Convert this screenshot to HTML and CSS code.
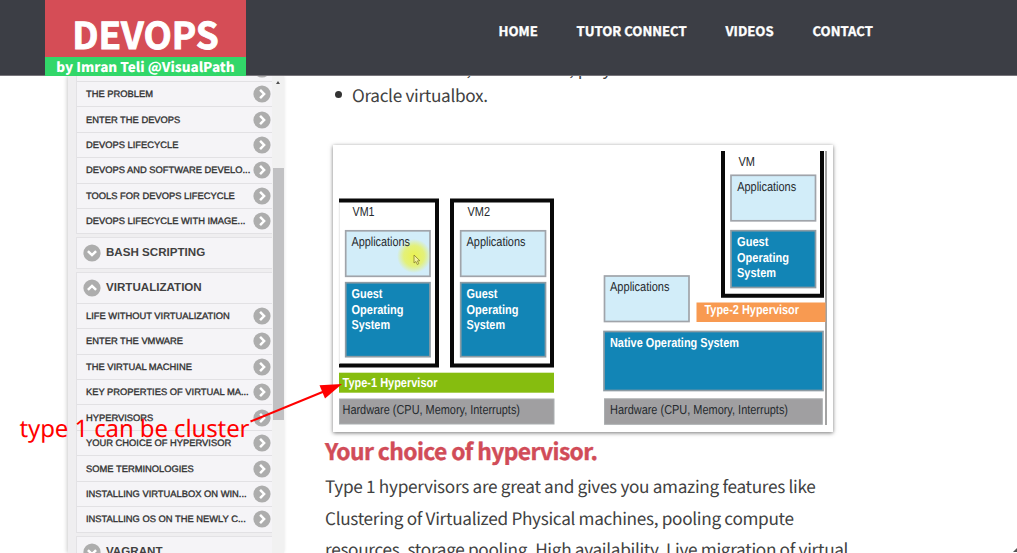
FILE: index.html
```
<!DOCTYPE html>
<html lang="en">
<head>
<meta charset="utf-8">
<title>DevOps by Imran Teli</title>
<link rel="stylesheet" href="styles.css">
</head>
<body>
<svg class="defs" width="0" height="0">
  <symbol id="chev" viewBox="0 0 18 18"><circle cx="9" cy="9" r="8.6" fill="#adadad"/><path d="M7.1 4.9l4 4.1-4 4.1" fill="none" stroke="#fff" stroke-width="2.5"/></symbol>
</svg>
<header class="header">
  <div class="logo">
    <div class="logo-title">DEVOPS</div>
    <div class="logo-sub">by Imran Teli @VisualPath</div>
  </div>
  <nav class="nav">
    <a class="n1">HOME</a><a class="n2">TUTOR CONNECT</a><a class="n3">VIDEOS</a><a class="n4">CONTACT</a>
  </nav>
</header>
<main class="main">
  <aside class="sidebar">
    <div class="menu">
      <div class="group first">
        <div class="row"><span></span><svg class="icon"><use href="#chev"/></svg></div>
        <div class="row"><span>THE PROBLEM</span><svg class="icon"><use href="#chev"/></svg></div>
        <div class="row"><span>ENTER THE DEVOPS</span><svg class="icon"><use href="#chev"/></svg></div>
        <div class="row"><span>DEVOPS LIFECYCLE</span><svg class="icon"><use href="#chev"/></svg></div>
        <div class="row"><span>DEVOPS AND SOFTWARE DEVELO...</span><svg class="icon"><use href="#chev"/></svg></div>
        <div class="row"><span>TOOLS FOR DEVOPS LIFECYCLE</span><svg class="icon"><use href="#chev"/></svg></div>
        <div class="row"><span>DEVOPS LIFECYCLE WITH IMAGE...</span><svg class="icon"><use href="#chev"/></svg></div>
      </div>
      <div class="group"><div class="head"><svg class="icon down"><use href="#chev"/></svg>BASH SCRIPTING</div></div>
      <div class="group">
        <div class="head"><svg class="icon up"><use href="#chev"/></svg>VIRTUALIZATION</div>
        <div class="row"><span>LIFE WITHOUT VIRTUALIZATION</span><svg class="icon"><use href="#chev"/></svg></div>
        <div class="row"><span>ENTER THE VMWARE</span><svg class="icon"><use href="#chev"/></svg></div>
        <div class="row"><span>THE VIRTUAL MACHINE</span><svg class="icon"><use href="#chev"/></svg></div>
        <div class="row"><span>KEY PROPERTIES OF VIRTUAL MA...</span><svg class="icon"><use href="#chev"/></svg></div>
        <div class="row"><span>HYPERVISORS</span><svg class="icon"><use href="#chev"/></svg></div>
        <div class="row"><span>YOUR CHOICE OF HYPERVISOR</span><svg class="icon"><use href="#chev"/></svg></div>
        <div class="row"><span>SOME TERMINOLOGIES</span><svg class="icon"><use href="#chev"/></svg></div>
        <div class="row"><span>INSTALLING VIRTUALBOX ON WIN...</span><svg class="icon"><use href="#chev"/></svg></div>
        <div class="row"><span>INSTALLING OS ON THE NEWLY C...</span><svg class="icon"><use href="#chev"/></svg></div>
      </div>
      <div class="group"><div class="head"><svg class="icon down"><use href="#chev"/></svg>VAGRANT</div></div>
    </div>
    <div class="scrollbar"><div class="arrow"></div><div class="thumb"></div></div>
  </aside>
  <section class="content">
    <ul class="list">
      <li class="cut">VMware server, workstation, player</li>
      <li>Oracle virtualbox.</li>
    </ul>
    <figure class="figure">
      <svg class="diagram" width="500" height="287" viewBox="333 145 500 287">
        <g fill="none" stroke="#090909" stroke-width="4">
          <path d="M339 200.5H437V365.5H339M452 200.5H552V365.5H452zM723 151V295.700H822V151"/>
        </g>
        <path d="M826 151V425" stroke="#8c8c8c" stroke-width="1.6"/>
        <path d="M339.300 203V364" stroke="#ddd" stroke-width=".7"/>
        <g fill="#d2edf9" stroke="#a0a4aa" stroke-width="1.7">
          <rect x="345.700" y="230.800" width="84.300" height="45.500"/><rect x="460.700" y="230.800" width="84.800" height="45.500"/>
          <rect x="731" y="175.300" width="84.500" height="45.500"/><rect x="604.500" y="276" width="84.500" height="45.500"/>
        </g>
        <g fill="#1285b6" stroke="#8d9ba3" stroke-width="1.7">
          <rect x="345.700" y="282.700" width="84.300" height="74"/><rect x="460.700" y="282.700" width="84.800" height="74"/>
          <rect x="731" y="230.700" width="84.500" height="56.800"/><rect x="604" y="331.500" width="219" height="59"/>
        </g>
        <rect x="339" y="372.700" width="215" height="20" fill="#86bd0f"/>
        <rect x="696.500" y="302.500" width="129" height="19.500" fill="#f89a51"/>
        <g fill="#a09fa1" stroke="#aaaeb0" stroke-width="1"><rect x="339.500" y="399" width="214.500" height="25"/><rect x="604.500" y="398.800" width="217.800" height="25.500"/></g>
        <radialGradient id="glow"><stop offset="0" stop-color="#ebf24e"/><stop offset=".6" stop-color="#e5f16c" stop-opacity=".9"/><stop offset="1" stop-color="#e5f16c" stop-opacity="0"/></radialGradient>
        <circle cx="414" cy="256" r="17" fill="url(#glow)"/>
        <g class="label">
          <text x="352.500" y="216" textLength="22" lengthAdjust="spacingAndGlyphs">VM1</text>
          <text x="467.500" y="216" textLength="22.500" lengthAdjust="spacingAndGlyphs">VM2</text>
          <text x="738.500" y="165.500" textLength="16.500" lengthAdjust="spacingAndGlyphs">VM</text>
          <text x="351.500" y="246" textLength="58.500" lengthAdjust="spacingAndGlyphs">Applications</text>
          <text x="466.500" y="246" textLength="59" lengthAdjust="spacingAndGlyphs">Applications</text>
          <text x="737.200" y="191" textLength="59" lengthAdjust="spacingAndGlyphs">Applications</text>
          <text x="610" y="291" textLength="59.500" lengthAdjust="spacingAndGlyphs">Applications</text>
          <text x="342.500" y="414" textLength="177.500" lengthAdjust="spacingAndGlyphs">Hardware (CPU, Memory, Interrupts)</text>
          <text x="610" y="414" textLength="178" lengthAdjust="spacingAndGlyphs">Hardware (CPU, Memory, Interrupts)</text>
        </g>
        <g class="label bold">
          <text x="351.500" y="298" textLength="31" lengthAdjust="spacingAndGlyphs">Guest</text>
          <text x="351.500" y="314" textLength="52" lengthAdjust="spacingAndGlyphs">Operating</text>
          <text x="351.500" y="329" textLength="38.500" lengthAdjust="spacingAndGlyphs">System</text>
          <text x="466.500" y="298" textLength="31" lengthAdjust="spacingAndGlyphs">Guest</text>
          <text x="466.500" y="314" textLength="52" lengthAdjust="spacingAndGlyphs">Operating</text>
          <text x="466.500" y="329" textLength="38.500" lengthAdjust="spacingAndGlyphs">System</text>
          <text x="737" y="246" textLength="31.500" lengthAdjust="spacingAndGlyphs">Guest</text>
          <text x="737" y="261.500" textLength="52" lengthAdjust="spacingAndGlyphs">Operating</text>
          <text x="737" y="277" textLength="39" lengthAdjust="spacingAndGlyphs">System</text>
          <text x="342.500" y="387" textLength="95" lengthAdjust="spacingAndGlyphs">Type-1 Hypervisor</text>
          <text x="704.500" y="314" textLength="94.500" lengthAdjust="spacingAndGlyphs">Type-2 Hypervisor</text>
          <text x="610" y="347" textLength="129" lengthAdjust="spacingAndGlyphs">Native Operating System</text>
        </g>
        <path d="M414 255v8l1.900-1.500 1.400 3 1.500-.8-1.400-2.800 2.400-.2z" fill="#f5f3a0" stroke="#85812c" stroke-width=".8"/>
      </svg>
    </figure>
    <h2 class="title">Your choice of hypervisor.</h2>
    <p class="text">Type 1 hypervisors are great and gives you amazing features like<br>Clustering of Virtualized Physical machines, pooling compute<br>resources, storage pooling, High availability, Live migration of virtual</p>
  </section>
</main>
<svg class="annotation" width="345" height="80" viewBox="0 370 345 80">
  <text x="19.500" y="437" textLength="230">type 1 can be cluster</text>
  <path d="M250.500 421.500L325 391" stroke="#f00" stroke-width="2"/>
  <path d="M342 384L319.500 385.200L325 398.500z" fill="#f00"/>
</svg>
<svg class="corner" width="6" height="6" viewBox="0 0 6 6"><path d="M2 5L6 1V5z" fill="#555"/></svg>
</body>
</html>
```

FILE: styles.css
```
* { box-sizing: border-box; }
body { margin: 0; width: 1017px; height: 553px; overflow: hidden; position: relative; background: #fff; font-family: "Noto Sans CJK SC", sans-serif; color: #414141; text-rendering: geometricPrecision; }
.defs { position: absolute; }
.header { height: 76px; background: #3c3e45; border-bottom: 1px solid #77757b; display: flex; padding-left: 45px; position: relative; z-index: 2; }
.logo { width: 201px; height: 76px; background: #d54d56; color: #fff; text-align: center; font-weight: 700; display: flex; flex-direction: column; justify-content: space-between; }
.logo-title { height: 57px; line-height: 67.500px; font-size: 36.800px; -webkit-text-stroke: .9px #fff; }
.logo-sub { height: 19px; line-height: 18px; font-size: 13.500px; background: #32d769; font-weight: 900; }
.nav { display: flex; padding: 20px 0 0 252.500px; color: #fff; font-weight: 700; font-size: 13.100px; line-height: 21px; white-space: nowrap; -webkit-text-stroke: .35px #fff; }
.n1 { width: 78px; }
.n2 { width: 149px; }
.n3 { width: 87px; }
.main { display: flex; height: 477px; overflow: hidden; }
.sidebar { margin-left: 68px; width: 216px; height: 477px; flex: none; background: #efeef0; display: flex; padding-left: 8px; box-shadow: -1px 0 4px #ccc; overflow: hidden; }
.menu { width: 196px; display: flex; flex-direction: column; gap: 3px; height: 477px; overflow: hidden; }
.group { flex: none; background: #f5f4f7; border: 1px solid #e3e2e5; border-width: 1px 0 0 1px; }
.first { margin-top: -20.600px; margin-bottom: -.8px; }
.row { height: 25.450px; display: flex; align-items: center; justify-content: space-between; padding: 0 1px 0 9px; border-bottom: 1px solid #e2e1e4; font: 9.350px "Liberation Sans", sans-serif; color: #333; -webkit-text-stroke: .35px #333; white-space: nowrap; }
.icon { width: 18px; height: 18px; flex: none; -webkit-text-stroke: 0; }
.down { transform: rotate(90deg); }
.up { transform: rotate(-90deg); }
.head { height: 31px; display: flex; align-items: center; gap: 5px; padding-left: 6px; font: bold 11.600px "Liberation Sans", sans-serif; border-bottom: 1px solid #e2e1e4; }
.scrollbar { width: 12px; background: #f1f1f1; height: 477px; }
.arrow { width: 0; margin: 5px 0 0 3.500px; border: 2.500px solid transparent; border-top: 0; border-bottom: 3px solid #505050; }
.thumb { background: #c1c1c3; height: 252px; margin-top: 84px; width: 11px; margin-left: 1px; }
.content { padding-left: 41px; width: 640px; }
.list { margin: -24px 0 0; padding: 0 0 0 27px; font-size: 17.200px; letter-spacing: -.32px; line-height: 31.500px; list-style: none; }
.list li { height: 31.500px; white-space: nowrap; display: flex; align-items: center; }
.list li::before { content: ""; width: 7px; height: 7px; border-radius: 50%; background: #333; margin: 0 10px 0 -17px; }
.list .cut { margin-bottom: -5px; letter-spacing: -.1px; }
.figure { margin: 35px 0 0 8px; width: 500px; height: 287px; box-shadow: 0 1px 4px #777; background: #fff; }
.diagram { display: block; }
.label { font: 13px "Liberation Sans", sans-serif; fill: #252a2e; }
.bold { font-weight: bold; fill: #fff; }
.title { margin: 2px 0 0; font-size: 22.800px; letter-spacing: -.6px; line-height: 33px; color: #d14c58; white-space: nowrap; -webkit-text-stroke: .4px #d14c58; }
.text { margin: 3px 0 0; font-size: 17.200px; letter-spacing: -.31px; line-height: 31.500px; white-space: nowrap; }
.annotation { position: absolute; left: 0; top: 370px; z-index: 3; font: 24px "Noto Sans", sans-serif; fill: #f00; }
.corner { position: absolute; right: 0; bottom: 0; }
```
